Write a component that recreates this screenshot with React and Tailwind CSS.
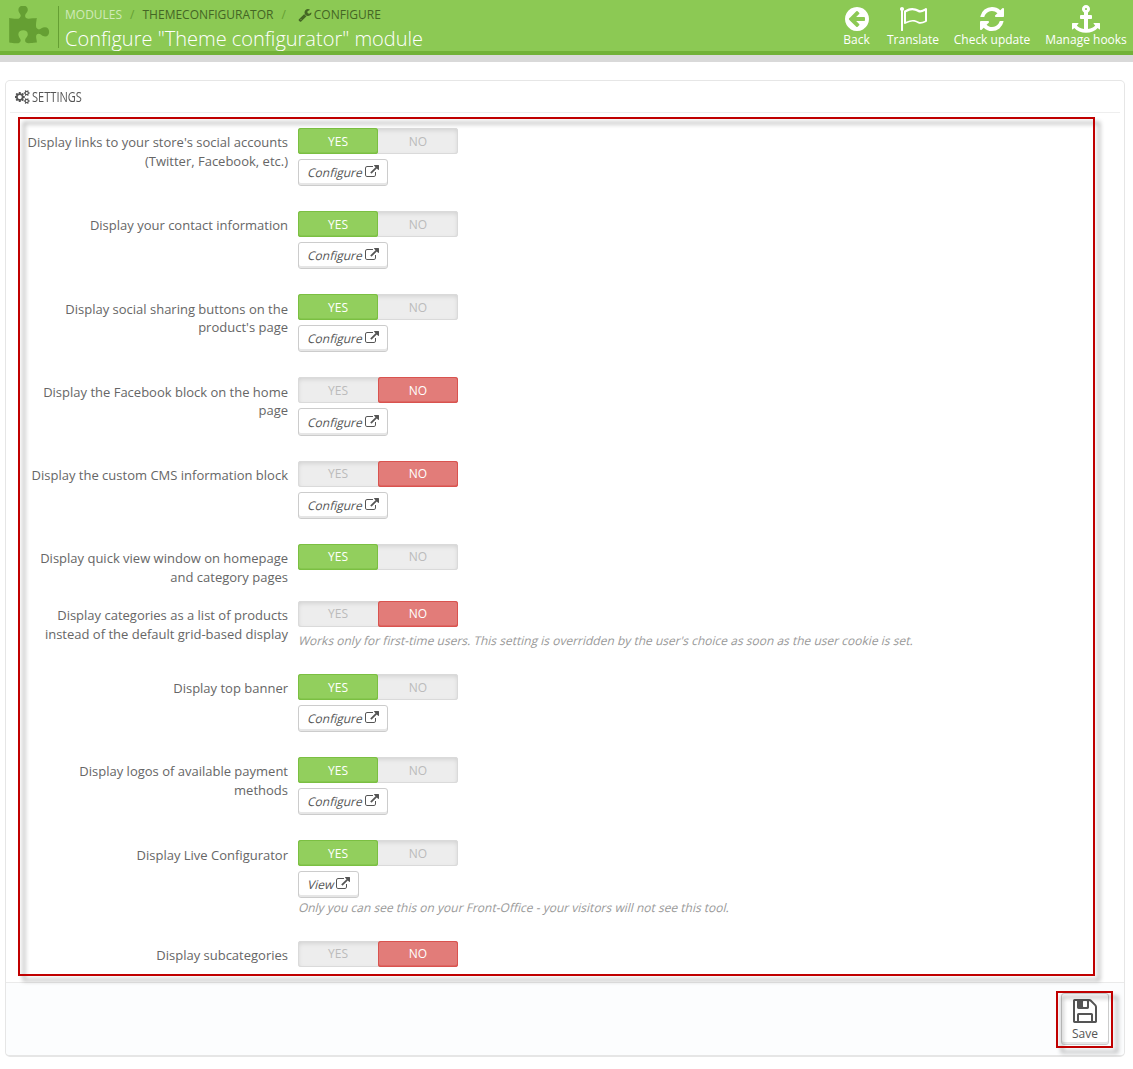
import React from "react";

const GEAR_SMALL =
  "v140q0 16-149 31-12 27-30 52 51 113 51 138 0 4-4 7-122 71-124 71-8 0-46-47t-52-68q-20 2-30 2t-30-2q-14 21-52 68t-46 47q-2 0-124-71-4-3-4-7 0-25 51-138-18-25-30-52-149-15-149-31v-140q0-16 149-31 13-29 30-52-51-113-51-138 0-4 4-7 4-2 35-20t59-34 30-16q8 0 46 46.500t52 67.500q20-2 30-2t30 2q51-71 92-112l6-2q4 0 124 70 4 3 4 7 0 25-51 138 17 23 30 52 149 15 149 31z";

const ICONS = {
  puzzle:
    "M1755 1083q0 81-44.5 135t-123.5 54q-41 0-77.5-17.5t-59-38-56.5-38-71-17.5q-110 0-110 124 0 39 16 115t15 115v5q-22 0-33 1-34 3-97.5 11.5t-115.5 13.5-98 5q-61 0-103-26.5t-42-83.5q0-37 17.5-71t38-56.5 38-59 17.5-77.5q0-79-54-123.5t-135-44.5q-84 0-143 45.5t-59 127.5q0 43 15 83t33.5 64.5 33.5 53 15 50.5q0 45-46 89-37 35-117 35-95 0-245-24-9-2-27.5-4t-27.5-4l-13-2q-1 0-3-1-2 0-2-1v-1024q2 1 17.5 3.5t34 5 21.5 3.5q150 24 245 24 80 0 117-35 46-44 46-89 0-22-15-50.5t-33.5-53-33.5-64.5-15-83q0-82 59-127.5t144-45.5q80 0 134 44.5t54 123.5q0 41-17.5 77.5t-38 59-38 56.5-17.5 71q0 57 42 83.5t103 26.5q64 0 180-15t163-17v2q-1 2-3.5 17.5t-5 34-3.5 21.5q-24 150-24 245 0 80 35 117 44 46 89 46 22 0 50.5-15t53-33.5 64.5-33.5 83-15q82 0 127.5 59t45.5 143z",
  wrench:
    "M448 1472q0-26-19-45t-45-19-45 19-19 45 19 45 45 19 45-19 19-45zm644-420l-682 682q-37 37-90 37-52 0-91-37l-106-108q-38-36-38-90 0-53 38-91l681-681q39 98 114.5 173.5t173.5 114.5zm634-435q0 39-23 106-47 134-164.5 217.5t-258.5 83.5q-185 0-316.5-131.5t-131.5-316.5 131.5-316.5 316.5-131.5q58 0 121.5 16.5t107.5 46.5q16 11 16 28t-16 28l-293 169v224l193 107q5-3 79-48.5t135.5-81 70.5-35.5q15 0 23.5 10t8.5 25z",
  back: "M1408 960v-128q0-26-19-45t-45-19h-502l189-189q19-19 19-45t-19-45l-91-91q-18-18-45-18t-45 18l-362 362-91 91q-18 18-18 45t18 45l91 91 362 362q18 18 45 18t45-18l91-91q18-18 18-45t-18-45l-189-189h502q26 0 45-19t19-45zm256-64q0 209-103 385.5t-279.5 279.5-385.5 103-385.5-103-279.5-279.5-103-385.5 103-385.5 279.5-279.5 385.5-103 385.5 103 279.5 279.5 103 385.5z",
  flag: "M1664 1000v-616q-169 91-306 91-82 0-145-32-100-49-184-76.5t-178-27.5q-173 0-403 127v599q245-113 433-113 55 0 103.5 7.5t98 26 77 31 82.5 39.5l28 14q44 22 101 22 120 0 293-92zm-1344-744q0 35-17.5 64t-46.5 46v1266q0 14-9 23t-23 9h-64q-14 0-23-9t-9-23v-1266q-29-17-46.5-46t-17.5-64q0-53 37.5-90.5t90.5-37.5 90.5 37.5 37.5 90.5zm1472 0v763q0 39-35 57-10 5-17 9-218 116-369 116-88 0-158-35l-28-14q-64-33-99-48t-91-29-114-14q-102 0-235.5 44t-228.5 102q-15 9-33 9-16 0-32-8-32-19-32-56v-742q0-35 31-55 35-21 78.5-42.5t114-52 152.5-49.5 155-19q112 0 209 31t209 86q38 19 89 19 122 0 310-112 22-12 31-17 31-16 62 2 31 20 31 55z",
  refresh:
    "M1639 1056q0 5-1 7-64 268-268 434.5t-478 166.5q-146 0-282.5-55t-243.5-157l-129 129q-19 19-45 19t-45-19-19-45v-448q0-26 19-45t45-19h448q26 0 45 19t19 45-19 45l-137 137q71 66 161 102t187 36q134 0 250-65t186-179q11-17 53-117 8-23 30-23h192q13 0 22.5 9.5t9.5 22.5zm25-800v448q0 26-19 45t-45 19h-448q-26 0-45-19t-19-45 19-45l138-138q-148-137-349-137-134 0-250 65t-186 179q-11 17-53 117-8 23-30 23h-199q-13 0-22.5-9.5t-9.5-22.5v-7q65-268 270-434.500t480-166.500q146 0 284 55.500t245 156.500l130-129q19-19 45-19t45 19 19 45z",
  anchor:
    "M960 256q0-26-19-45t-45-19-45 19-19 45 19 45 45 19 45-19 19-45zm832 928v352q0 22-20 30-8 2-12 2-12 0-23-9l-93-93q-119 143-318.5 226.5t-429.5 83.5-429.5-83.5-318.5-226.5l-93 93q-9 9-23 9-4 0-12-2-20-8-20-30v-352q0-14 9-23t23-9h352q22 0 30 20 8 19-7 35l-100 100q67 91 189.5 153.500t271.500 82.500v-647h-192q-26 0-45-19t-19-45v-128q0-26 19-45t45-19h192v-163q-58-34-93-92.500t-35-128.500q0-106 75-181t181-75 181 75 75 181q0 70-35 128.500t-93 92.500v163h192q26 0 45 19t19 45v128q0 26-19 45t-45 19h-192v647q149-20 271.500-82.500t189.500-153.500l-100-100q-15-16-7-35 8-20 30-20h352q14 0 23 9t9 23z",
  external:
    "M1408 928v320q0 119-84.5 203.5t-203.5 84.5h-832q-119 0-203.5-84.5t-84.5-203.5v-832q0-119 84.5-203.5t203.5-84.5h704q14 0 23 9t9 23v64q0 14-9 23t-23 9h-704q-66 0-113 47t-47 113v832q0 66 47 113t113 47h832q66 0 113-47t47-113v-320q0-14 9-23t23-9h64q14 0 23 9t9 23zm384-864v512q0 26-19 45t-45 19-45-19l-176-176-652 652q-10 10-23 10t-23-10l-114-114q-10-10-10-23t10-23l652-652-176-176q-19-19-19-45t19-45 45-19h512q26 0 45 19t19 45z",
  save: "M512 1536h768v-384h-768v384zm896 0h128v-896q0-14-10-38.5t-20-34.5l-281-281q-10-10-34-20t-39-10v416q0 40-28 68t-68 28h-576q-40 0-68-28t-28-68v-416h-128v1280h128v-416q0-40 28-68t68-28h832q40 0 68 28t28 68v416zm-384-928v-320q0-13-9.5-22.5t-22.5-9.5h-192q-13 0-22.5 9.5t-9.5 22.5v320q0 13 9.5 22.5t22.5 9.5h192q13 0 22.5-9.5t9.5-22.5zm640 32v928q0 40-28 68t-68 28h-1344q-40 0-68-28t-28-68v-1344q0-40 28-68t68-28h928q40 0 88 20t76 48l280 280q28 28 48 76t20 88z",
  cogs:
    "M832 896q0-106-75-181t-181-75-181 75-75 181 75 181 181 75 181-75 75-181zm768 512q0-52-38-90t-90-38-90 38-38 90q0 53 37.5 90.5t90.5 37.5 90.5-37.5 37.5-90.5zm0-1024q0-52-38-90t-90-38-90 38-38 90q0 53 37.5 90.5t90.5 37.5 90.5-37.5 37.5-90.5zm-384 421v185q0 10-7 19.5t-16 10.5l-155 24q-11 35-32 76 34 48 90 115 7 11 7 20 0 12-7 19-23 30-82.5 89.5t-78.5 59.5q-11 0-21-7l-115-90q-37 19-77 31-11 108-23 155-7 24-30 24h-186q-11 0-20-7.5t-10-17.5l-23-153q-34-10-75-31l-118 89q-7 7-20 7-11 0-21-8-144-133-144-160 0-9 7-19 10-14 41-53t47-61q-23-44-35-82l-152-24q-10-1-17-9.5t-7-19.5v-185q0-10 7-19.5t16-10.5l155-24q11-35 32-76-34-48-90-115-7-11-7-20 0-12 7-20 22-30 82-89t79-59q11 0 21 7l115 90q34-18 77-32 11-108 23-154 7-24 30-24h186q11 0 20 7.5t10 17.5l23 153q34 10 75 31l118-89q8-7 20-7 11 0 21 8 144 133 144 160 0 8-7 19-12 16-42 54t-45 60q23 48 34 82l152 23q10 2 17 10.5t7 19.5zM1856 1338" +
    GEAR_SMALL +
    "M1856 314" +
    GEAR_SMALL,
};

function Icon({ name, className, viewBox = "0 0 1792 1792" }) {
  return (
    <svg viewBox={viewBox} fill="currentColor" className={className} aria-hidden="true">
      <path d={ICONS[name]} />
    </svg>
  );
}

const actions = [
  { icon: "back", label: "Back", item: "w-[27px] mr-[2px]" },
  { icon: "flag", label: "Translate", item: "w-[52px]" },
  { icon: "refresh", label: "Check update", item: "w-[76px]" },
  { icon: "anchor", label: "Manage hooks", item: "w-[82px]" },
];

const rows = [
  { lines: ["Display links to your store's social accounts", "(Twitter, Facebook, etc.)"], on: true, button: "Configure", height: "h-[83px]" },
  { lines: ["Display your contact information"], on: true, button: "Configure", height: "h-[83px]" },
  { lines: ["Display social sharing buttons on the", "product's page"], on: true, button: "Configure", height: "h-[83px]", low: true },
  { lines: ["Display the Facebook block on the home", "page"], on: false, button: "Configure", height: "h-[84px]", low: true, tallButton: true },
  { lines: ["Display the custom CMS information block"], on: false, button: "Configure", height: "h-[83px]", tight: true },
  { lines: ["Display quick view window on homepage", "and category pages"], on: true, height: "h-[57px]", tight: true },
  {
    lines: ["Display categories as a list of products", "instead of the default grid-based display"],
    on: false,
    hint: "Works only for first-time users. This setting is overridden by the user's choice as soon as the user cookie is set.",
    height: "h-[73px]",
    tight: true,
  },
  { lines: ["Display top banner"], on: true, button: "Configure", height: "h-[83px]" },
  { lines: ["Display logos of available payment", "methods"], on: true, button: "Configure", height: "h-[83px]" },
  {
    lines: ["Display Live Configurator"],
    on: true,
    button: "View",
    hint: "Only you can see this on your Front-Office - your visitors will not see this tool.",
    height: "h-[101px]",
    low: true,
  },
  { lines: ["Display subcategories"], on: false, height: "h-[41px]", tight: true },
];

function Switch({ on, tight }) {
  const idle = "text-[#bbb]";
  return (
    <div
      className={
        "flex h-[26px] w-40 rounded-[3px] bg-[#ededed] text-xs shadow-[inset_0_0_0_1px_#dadada,inset_0_2px_5px_rgba(0,0,0,0.13)] " +
        (tight ? "leading-[26px]" : "leading-[27px]")
      }
    >
      <span
        className={
          "w-20 rounded-[3px] text-center " +
          (on ? "bg-[#92cf5d] text-white shadow-[inset_0_0_0_1px_#7bbf42,inset_0_-2px_0_#86c750]" : idle)
        }
      >
        YES
      </span>
      <span
        className={
          "w-20 rounded-[3px] text-center " +
          (on ? idle : "bg-[#e27c79] text-white shadow-[inset_0_0_0_1px_#d9534f,inset_0_-2px_0_#dd6763]")
        }
      >
        NO
      </span>
    </div>
  );
}

function Row({ lines, on, button, hint, height, low, tight, tallButton }) {
  return (
    <div className={"flex " + height}>
      <div
        className={
          "w-[282px] text-right text-[13px] leading-[18.5px] whitespace-nowrap text-[#666] " +
          (low ? "pt-[5.5px]" : "pt-[5px]")
        }
      >
        {lines.map((line) => (
          <div key={line}>{line}</div>
        ))}
      </div>
      <div className="ml-[10px] flex flex-col items-start">
        <Switch on={on} tight={tight} />
        {button && (
          <button
            className={
              "mt-[5px] flex items-center rounded-[3px] border border-[#ccc] bg-white pl-[9px] text-xs text-[#555] shadow-[inset_0_-2px_0_#e6e6e6] " +
              (button === "View" ? "w-[61px] " : "w-[90px] ") +
              (tallButton ? "h-[28px] pt-px" : "h-[27px]")
            }
          >
            <span className="-skew-x-[14deg]">{button}</span>
            <Icon name="external" className="mb-[2px] ml-[2px] h-[14px] w-[14px] shrink-0" />
          </button>
        )}
        {hint && (
          <p
            className={
              "ml-px -skew-x-[14deg] text-xs leading-[17px] tracking-[0.008px] whitespace-nowrap text-[#999] " +
              (button ? "mt-px" : "mt-[5px]")
            }
          >
            {hint}
          </p>
        )}
      </div>
    </div>
  );
}

export default function App() {
  return (
    <div className="relative h-[1069px] w-[1133px] overflow-hidden bg-white font-['Open_Sans',sans-serif]">
      <header className="flex h-[62px] border-b-[7px] border-[#d9d9d9] bg-[#8cc954]">
        <div className="flex h-[55px] w-full border-b-4 border-[#72b238]">
          <div className="flex w-[59px] pt-[6px] pl-[7px]">
            <Icon name="puzzle" className="h-[43px] w-[43px] text-[#659f33]" />
          </div>
          <div className="-ml-[1px] mt-[6px] h-[42px] w-px bg-[#659f33]" />
          <div className="ml-[6px]">
            <nav className="mt-[6px] flex h-[18px] items-center text-xs whitespace-nowrap text-[#446624]">
              <span className="text-[#d0eab9]">MODULES</span>
              <span className="mx-2 text-[#659f33]">/</span>
              <span>THEMECONFIGURATOR</span>
              <span className="mx-2 text-[#659f33]">/</span>
              <Icon name="wrench" className="mr-[2px] ml-1 h-[14px] w-[14px]" />
              <span>CONFIGURE</span>
            </nav>
            <h1 className="mt-px text-[20px] leading-[28px] font-light whitespace-nowrap text-white">
              Configure "Theme configurator" module
            </h1>
          </div>
          <div className="mr-[6px] ml-auto flex gap-[15px] text-white">
            {actions.map((a) => (
              <div key={a.label} className={"flex flex-col items-center pt-[5px] " + a.item}>
                <Icon name={a.icon} className="h-7 w-7" />
                <span className="-mt-px text-xs leading-4 whitespace-nowrap">{a.label}</span>
              </div>
            ))}
          </div>
        </div>
      </header>

      <main className="mt-[18px] ml-[5px] flex h-[977px] w-[1120px] flex-col rounded-[5px] border border-b-2 border-[#e6e6e6] bg-white">
        <div className="mx-1 flex h-8 shrink-0 items-center border-b border-[#eee] pl-[5px] text-[#555]">
          <Icon name="cogs" viewBox="0 0 1856 1792" className="h-[14px] w-[15px]" />
          <h2 className="ml-[2px] origin-left scale-x-[0.79] text-[14px] leading-5 font-medium">SETTINGS</h2>
        </div>
        <section className="pt-[15px]">
          {rows.map((row) => (
            <Row key={row.lines[0]} {...row} />
          ))}
        </section>
        <footer className="mt-auto flex h-[73px] justify-end rounded-b-[4px] border-t border-[#eaeaea] bg-[#fcfdfe] pt-[10px] pr-[15px]">
          <button className="flex h-[52px] w-[48px] flex-col items-center rounded-[3px] border border-[#ccc] bg-white pt-[3px] text-[#555] shadow-[inset_0_-2px_0_#e6e6e6]">
            <Icon name="save" className="h-7 w-7" />
            <span className="mt-px text-xs leading-4">Save</span>
          </button>
        </footer>
      </main>

      <div className="pointer-events-none absolute top-[117px] left-[18px] h-[859px] w-[1077px] border-2 border-[#c00000] drop-shadow-[5px_5px_2px_rgba(0,0,0,0.35)]" />
      <div className="pointer-events-none absolute top-[991px] left-[1056px] h-[57px] w-[57px] border-2 border-[#c00000] drop-shadow-[5px_5px_2px_rgba(0,0,0,0.35)]" />
    </div>
  );
}
